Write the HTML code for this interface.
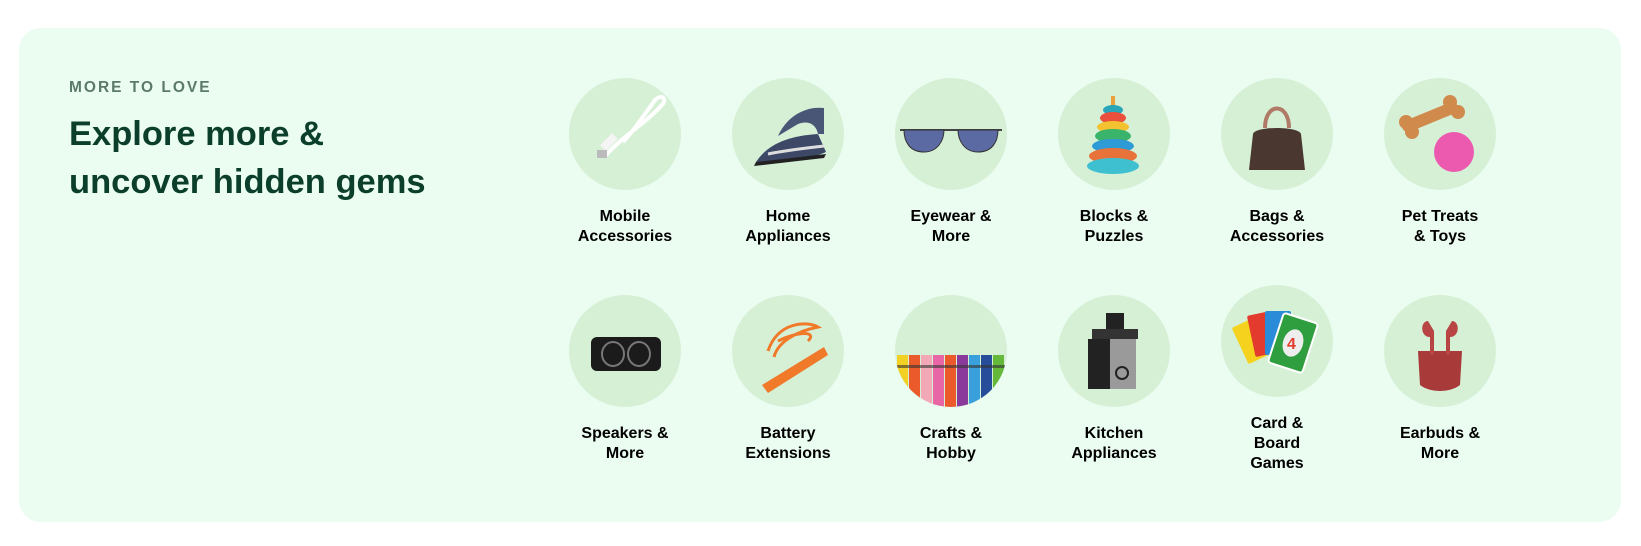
<!DOCTYPE html>
<html><head><meta charset="utf-8"><style>
*{margin:0;padding:0;box-sizing:border-box}
body{width:1641px;height:546px;background:#fff;font-family:"Liberation Sans",Arial,sans-serif;position:relative;overflow:hidden}
.card{position:absolute;left:19px;top:28px;width:1602px;height:494px;background:#ebfcf1;border-radius:22px}
.kick{position:absolute;left:69px;top:79px;font-size:15.5px;font-weight:bold;letter-spacing:2px;color:#5b7a6a}
.h{position:absolute;left:69px;top:110px;font-size:34.5px;font-weight:bold;line-height:48px;color:#0b3f2b}
.it{position:absolute;width:160px;margin-left:-80px;text-align:center}
.c{width:112px;height:112px;border-radius:50%;background:#d6f0d6;margin:0 auto;overflow:hidden;display:flex;align-items:center;justify-content:center}
.l{font-size:16px;font-weight:bold;line-height:20px;color:#000;margin-top:17px}
</style></head><body>
<div class="card"></div>
<div class="kick">MORE TO LOVE</div>
<div class="h">Explore more &amp;<br>uncover hidden gems</div>

<div class="it" style="left:625px;top:78px"><div class="c"><svg width="100" height="100" viewBox="0 0 100 100"><path d="M30 72 C50 50 70 40 88 20 C92 14 86 10 80 16 C70 30 60 45 48 58" stroke="#fff" stroke-width="4" fill="none"/><path d="M28 64 L40 52" stroke="#f4f4f4" stroke-width="8"/><rect x="22" y="66" width="10" height="8" fill="#bbb"/></svg></div><div class="l">Mobile<br>Accessories</div></div>
<div class="it" style="left:788px;top:78px"><div class="c"><svg width="100" height="100" viewBox="0 0 100 100"><path d="M18 78 C30 60 50 52 80 50 L88 68 C70 76 40 80 18 78Z" fill="#3c4866"/><path d="M18 78 L88 70 L86 74 L16 82Z" fill="#222"/><path d="M40 52 C50 30 70 22 86 24 L86 50 L80 50 C78 40 70 36 60 40Z" fill="#4a5676"/><path d="M30 70 C50 66 70 64 86 62" stroke="#ddd" stroke-width="3" fill="none"/></svg></div><div class="l">Home<br>Appliances</div></div>
<div class="it" style="left:951px;top:78px"><div class="c"><svg width="110" height="100" viewBox="0 0 110 100"><path d="M4 46 L106 46" stroke="#444" stroke-width="2"/><path d="M8 46 C8 58 14 68 28 68 C42 68 48 56 48 46Z" fill="#5b6aa3" stroke="#333"/><path d="M62 46 C62 56 68 68 82 68 C96 68 102 58 102 46Z" fill="#5b6aa3" stroke="#333"/></svg></div><div class="l">Eyewear &amp;<br>More</div></div>
<div class="it" style="left:1114px;top:78px"><div class="c"><svg width="100" height="100" viewBox="0 0 100 100"><rect x="47" y="12" width="4" height="10" fill="#e9a23b"/><ellipse cx="49" cy="26" rx="10" ry="5" fill="#2aa6b8"/><ellipse cx="49" cy="34" rx="13" ry="6" fill="#e94f3a"/><ellipse cx="49" cy="43" rx="16" ry="6" fill="#f4c230"/><ellipse cx="49" cy="52" rx="18" ry="7" fill="#3ab46a"/><ellipse cx="49" cy="62" rx="21" ry="7" fill="#2e9bd6"/><ellipse cx="49" cy="72" rx="24" ry="8" fill="#e8733a"/><ellipse cx="49" cy="82" rx="26" ry="8" fill="#3fc0d0"/></svg></div><div class="l">Blocks &amp;<br>Puzzles</div></div>
<div class="it" style="left:1277px;top:78px"><div class="c"><svg width="100" height="100" viewBox="0 0 100 100"><path d="M38 44 C38 18 62 18 62 44" stroke="#b07a66" stroke-width="4" fill="none"/><path d="M22 86 L26 50 C28 42 72 42 74 50 L78 86Z" fill="#4a3830"/></svg></div><div class="l">Bags &amp;<br>Accessories</div></div>
<div class="it" style="left:1440px;top:78px"><div class="c"><svg width="100" height="100" viewBox="0 0 100 100"><path d="M18 42 L62 24" stroke="#d08a4c" stroke-width="12" stroke-linecap="round"/><circle cx="16" cy="38" r="7" fill="#d08a4c"/><circle cx="22" cy="48" r="7" fill="#d08a4c"/><circle cx="60" cy="18" r="7" fill="#d08a4c"/><circle cx="68" cy="28" r="7" fill="#d08a4c"/><circle cx="64" cy="68" r="20" fill="#ec5ab0"/></svg></div><div class="l">Pet Treats<br>&amp; Toys</div></div>

<div class="it" style="left:625px;top:295px"><div class="c"><svg width="100" height="100" viewBox="0 0 100 100"><rect x="16" y="36" width="70" height="34" rx="6" fill="#1b1b1b"/><ellipse cx="38" cy="53" rx="11" ry="12" fill="none" stroke="#777" stroke-width="2"/><ellipse cx="64" cy="53" rx="11" ry="12" fill="none" stroke="#777" stroke-width="2"/></svg></div><div class="l">Speakers &amp;<br>More</div></div>
<div class="it" style="left:788px;top:295px"><div class="c"><svg width="100" height="100" viewBox="0 0 100 100"><path d="M30 50 C40 20 70 20 80 26 C60 30 40 40 36 56 M40 40 C60 30 80 30 70 40" stroke="#f07a2a" stroke-width="3" fill="none"/><path d="M24 84 L86 46 L90 54 L30 92Z" fill="#f07a2a"/></svg></div><div class="l">Battery<br>Extensions</div></div>
<div class="it" style="left:951px;top:295px"><div class="c"><svg width="112" height="112" viewBox="0 0 112 112"><g><rect x="2" y="60" width="11" height="52" fill="#f2d024"/><rect x="14" y="60" width="11" height="52" fill="#ea5a2a"/><rect x="26" y="60" width="11" height="52" fill="#f3a8b8"/><rect x="38" y="60" width="11" height="52" fill="#e866a6"/><rect x="50" y="60" width="11" height="52" fill="#ec5a2c"/><rect x="62" y="60" width="11" height="52" fill="#8a3a9a"/><rect x="74" y="60" width="11" height="52" fill="#3aa0dc"/><rect x="86" y="60" width="11" height="52" fill="#274c9a"/><rect x="98" y="60" width="11" height="52" fill="#64b83a"/><rect x="0" y="70" width="112" height="3" fill="#333" opacity=".6"/></g></svg></div><div class="l">Crafts &amp;<br>Hobby</div></div>
<div class="it" style="left:1114px;top:295px"><div class="c"><svg width="100" height="100" viewBox="0 0 100 100"><rect x="42" y="12" width="18" height="16" fill="#222"/><rect x="28" y="28" width="46" height="10" fill="#333"/><rect x="24" y="38" width="24" height="50" fill="#222"/><rect x="46" y="38" width="26" height="50" fill="#9a9a9a"/><circle cx="58" cy="72" r="6" fill="none" stroke="#222" stroke-width="2"/></svg></div><div class="l">Kitchen<br>Appliances</div></div>
<div class="it" style="left:1277px;top:285px"><div class="c"><svg width="100" height="100" viewBox="0 0 100 100"><rect x="12" y="30" width="24" height="40" rx="2" fill="#f4d21e" transform="rotate(-25 24 50)"/><rect x="24" y="22" width="24" height="42" rx="2" fill="#e33c2e" transform="rotate(-12 36 43)"/><rect x="38" y="20" width="26" height="44" rx="2" fill="#2a8cd8"/><rect x="48" y="26" width="36" height="52" rx="3" fill="#2f9e3e" stroke="#fff" stroke-width="2" transform="rotate(18 66 52)"/><ellipse cx="66" cy="52" rx="10" ry="14" fill="#eee" transform="rotate(18 66 52)"/><text x="60" y="58" font-size="16" font-weight="bold" fill="#e33c2e" font-family="Liberation Sans">4</text></svg></div><div class="l">Card &amp;<br>Board<br>Games</div></div>
<div class="it" style="left:1440px;top:295px"><div class="c"><svg width="100" height="100" viewBox="0 0 100 100"><path d="M28 50 L72 50 L70 84 C60 92 40 92 30 84Z" fill="#a83a3a"/><path d="M38 20 C30 20 30 36 40 36 L40 54 L44 54 L44 30Z" fill="#b84444"/><path d="M62 20 C70 20 70 36 60 36 L60 54 L56 54 L56 30Z" fill="#b84444"/></svg></div><div class="l">Earbuds &amp;<br>More</div></div>
</body></html>
